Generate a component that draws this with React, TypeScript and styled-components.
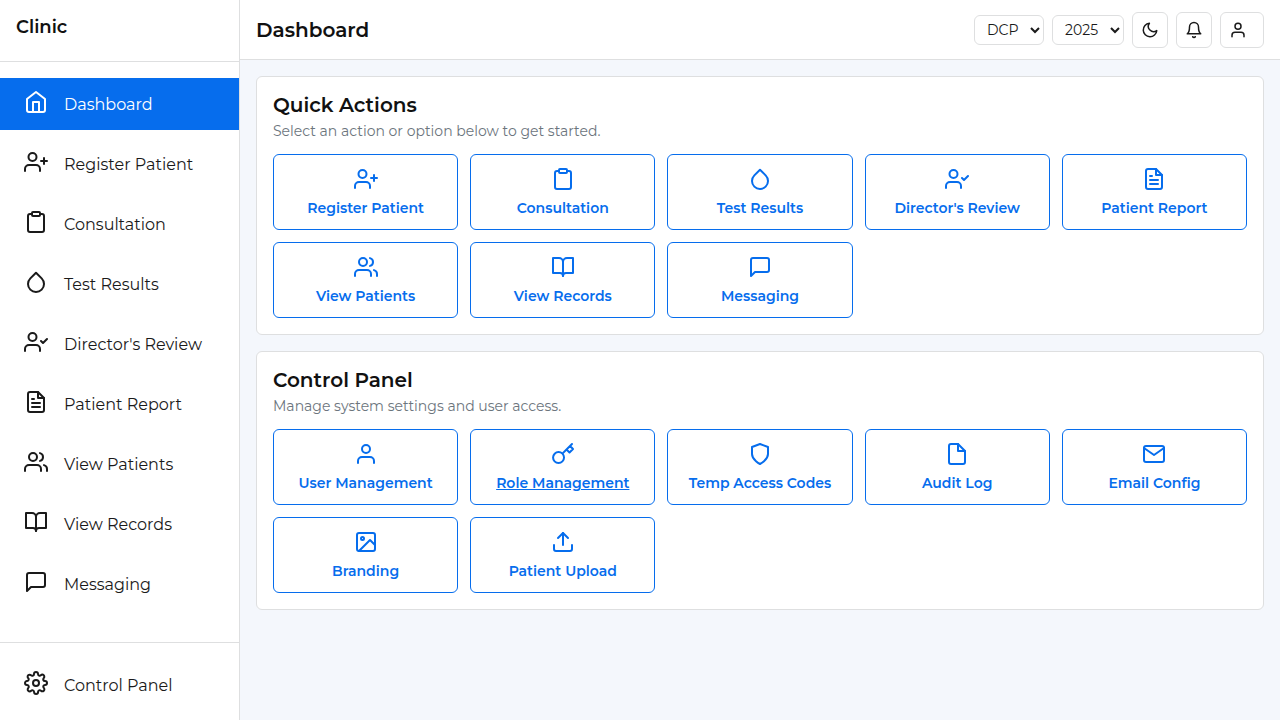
import React from 'react';
import styled, { createGlobalStyle } from 'styled-components';
import type { IconType } from 'react-icons';
import {
  FiBell, FiBookOpen, FiClipboard, FiDroplet, FiFile, FiFileText, FiHome, FiImage, FiKey, FiMail,
  FiMessageSquare, FiMoon, FiSettings, FiShield, FiUpload, FiUser, FiUserCheck, FiUserPlus, FiUsers,
} from 'react-icons/fi';

const color = {
  primary: '#066ded',
  text: '#1a1a1a',
  heading: '#111111',
  muted: '#6c757d',
  border: '#dedfe0',
  page: '#f4f7fc',
  surface: '#ffffff',
};

const GlobalStyle = createGlobalStyle`
  *, *::before, *::after { box-sizing: border-box; }
  body {
    margin: 0;
    background: ${color.page};
    color: ${color.text};
    font: 400 16px/24px Montserrat, Inter, sans-serif;
  }
  h1, h2, p, ul { margin: 0; padding: 0; }
  button, select { font: inherit; color: inherit; }
`;

const Shell = styled.div`
  display: grid;
  grid-template-columns: 240px minmax(0, 1fr);
  min-height: 100vh;
`;

const Sidebar = styled.aside`
  display: flex;
  flex-direction: column;
  background: ${color.surface};
  border-right: 1px solid ${color.border};
`;

const Brand = styled.div`
  padding: 16px 16px 22px;
  border-bottom: 1px solid ${color.border};
  color: ${color.heading};
  font-size: 18px;
  font-weight: 600;
  line-height: 23px;
`;

const Nav = styled.nav`
  flex: 1;
  padding: 16px 0;
`;

const NavList = styled.ul`
  display: grid;
  gap: 8px;
  list-style: none;
`;

const NavLink = styled.a<{ $active?: boolean }>`
  display: flex;
  gap: 16px;
  height: 52px;
  padding: 12px 24px 10px;
  background: ${(p) => (p.$active ? color.primary : 'transparent')};
  color: ${(p) => (p.$active ? color.surface : color.text)};
  line-height: 30px;
  text-decoration: none;
  white-space: nowrap;
`;

const SidebarFooter = styled.div`
  padding: 16px 0 9px;
  border-top: 1px solid ${color.border};
`;

const Content = styled.div`
  display: flex;
  flex-direction: column;
`;

const TopBar = styled.header`
  display: flex;
  align-items: center;
  justify-content: space-between;
  height: 60px;
  padding: 0 16px;
  background: ${color.surface};
  border-bottom: 1px solid ${color.border};
`;

const PageTitle = styled.h1`
  color: ${color.heading};
  font-size: 20px;
  font-weight: 600;
  line-height: 24px;
`;

const Tools = styled.div`
  display: flex;
  align-items: center;
  gap: 8px;
`;

const Picker = styled.select<{ $width: number }>`
  width: ${(p) => p.$width}px;
  height: 30px;
  padding: 0 0 0 8px;
  border: 1px solid ${color.border};
  border-radius: 6px;
  background: ${color.surface};
  font-size: 14px;
`;

const ToolButton = styled.button<{ $wide?: boolean }>`
  display: flex;
  align-items: center;
  width: ${(p) => (p.$wide ? 44 : 36)}px;
  height: 36px;
  padding: 0 8px;
  border: 1px solid ${color.border};
  border-radius: 6px;
  background: ${color.surface};
`;

const Main = styled.main`
  display: grid;
  gap: 16px;
  padding: 16px;
`;

const Panel = styled.section`
  padding: 16px;
  border: 1px solid ${color.border};
  border-radius: 6px;
  background: ${color.surface};
`;

const PanelTitle = styled.h2`
  color: ${color.heading};
  font-size: 20px;
  font-weight: 600;
  line-height: 24px;
`;

const PanelNote = styled.p`
  margin: 4px 0 12px;
  color: ${color.muted};
  font-size: 14px;
  line-height: 21px;
`;

const TileGrid = styled.div`
  display: grid;
  grid-template-columns: repeat(5, minmax(0, 1fr));
  gap: 12px;
`;

const Tile = styled.a<{ $underlined?: boolean }>`
  display: flex;
  flex-direction: column;
  align-items: center;
  gap: 7px;
  height: 76px;
  padding: 12px 8px 10px;
  border: 1px solid ${color.primary};
  border-radius: 6px;
  color: ${color.primary};
  font-size: 14px;
  font-weight: 600;
  line-height: 21px;
  text-decoration: ${(p) => (p.$underlined ? 'underline' : 'none')};
  white-space: nowrap;
`;

type Item = { label: string; icon: IconType; underlined?: boolean };

const actions: Item[] = [
  { label: 'Register Patient', icon: FiUserPlus },
  { label: 'Consultation', icon: FiClipboard },
  { label: 'Test Results', icon: FiDroplet },
  { label: "Director's Review", icon: FiUserCheck },
  { label: 'Patient Report', icon: FiFileText },
  { label: 'View Patients', icon: FiUsers },
  { label: 'View Records', icon: FiBookOpen },
  { label: 'Messaging', icon: FiMessageSquare },
];

const settings: Item[] = [
  { label: 'User Management', icon: FiUser },
  { label: 'Role Management', icon: FiKey, underlined: true },
  { label: 'Temp Access Codes', icon: FiShield },
  { label: 'Audit Log', icon: FiFile },
  { label: 'Email Config', icon: FiMail },
  { label: 'Branding', icon: FiImage },
  { label: 'Patient Upload', icon: FiUpload },
];

const navItems: Item[] = [{ label: 'Dashboard', icon: FiHome }, ...actions];

function TilePanel({ title, note, items }: { title: string; note: string; items: Item[] }) {
  return (
    <Panel>
      <PanelTitle>{title}</PanelTitle>
      <PanelNote>{note}</PanelNote>
      <TileGrid>
        {items.map(({ label, icon: Icon, underlined }) => (
          <Tile key={label} href="#" $underlined={underlined}>
            <Icon size={24} aria-hidden />
            <span>{label}</span>
          </Tile>
        ))}
      </TileGrid>
    </Panel>
  );
}

export default function App() {
  return (
    <>
      <GlobalStyle />
      <Shell>
        <Sidebar>
          <Brand>Clinic</Brand>
          <Nav aria-label="Main">
            <NavList>
              {navItems.map(({ label, icon: Icon }, i) => (
                <li key={label}>
                  <NavLink href="#" $active={i === 0} aria-current={i === 0 ? 'page' : undefined}>
                    <Icon size={24} aria-hidden />
                    <span>{label}</span>
                  </NavLink>
                </li>
              ))}
            </NavList>
          </Nav>
          <SidebarFooter>
            <NavLink href="#">
              <FiSettings size={24} aria-hidden />
              <span>Control Panel</span>
            </NavLink>
          </SidebarFooter>
        </Sidebar>
        <Content>
          <TopBar>
            <PageTitle>Dashboard</PageTitle>
            <Tools>
              <Picker $width={70} aria-label="Programme" defaultValue="DCP">
                <option>DCP</option>
              </Picker>
              <Picker $width={72} aria-label="Year" defaultValue="2025">
                <option>2025</option>
              </Picker>
              <ToolButton type="button" aria-label="Dark mode"><FiMoon size={18} /></ToolButton>
              <ToolButton type="button" aria-label="Notifications"><FiBell size={18} /></ToolButton>
              <ToolButton type="button" aria-label="Account" $wide><FiUser size={18} /></ToolButton>
            </Tools>
          </TopBar>
          <Main>
            <TilePanel title="Quick Actions" note="Select an action or option below to get started." items={actions} />
            <TilePanel title="Control Panel" note="Manage system settings and user access." items={settings} />
          </Main>
        </Content>
      </Shell>
    </>
  );
}
